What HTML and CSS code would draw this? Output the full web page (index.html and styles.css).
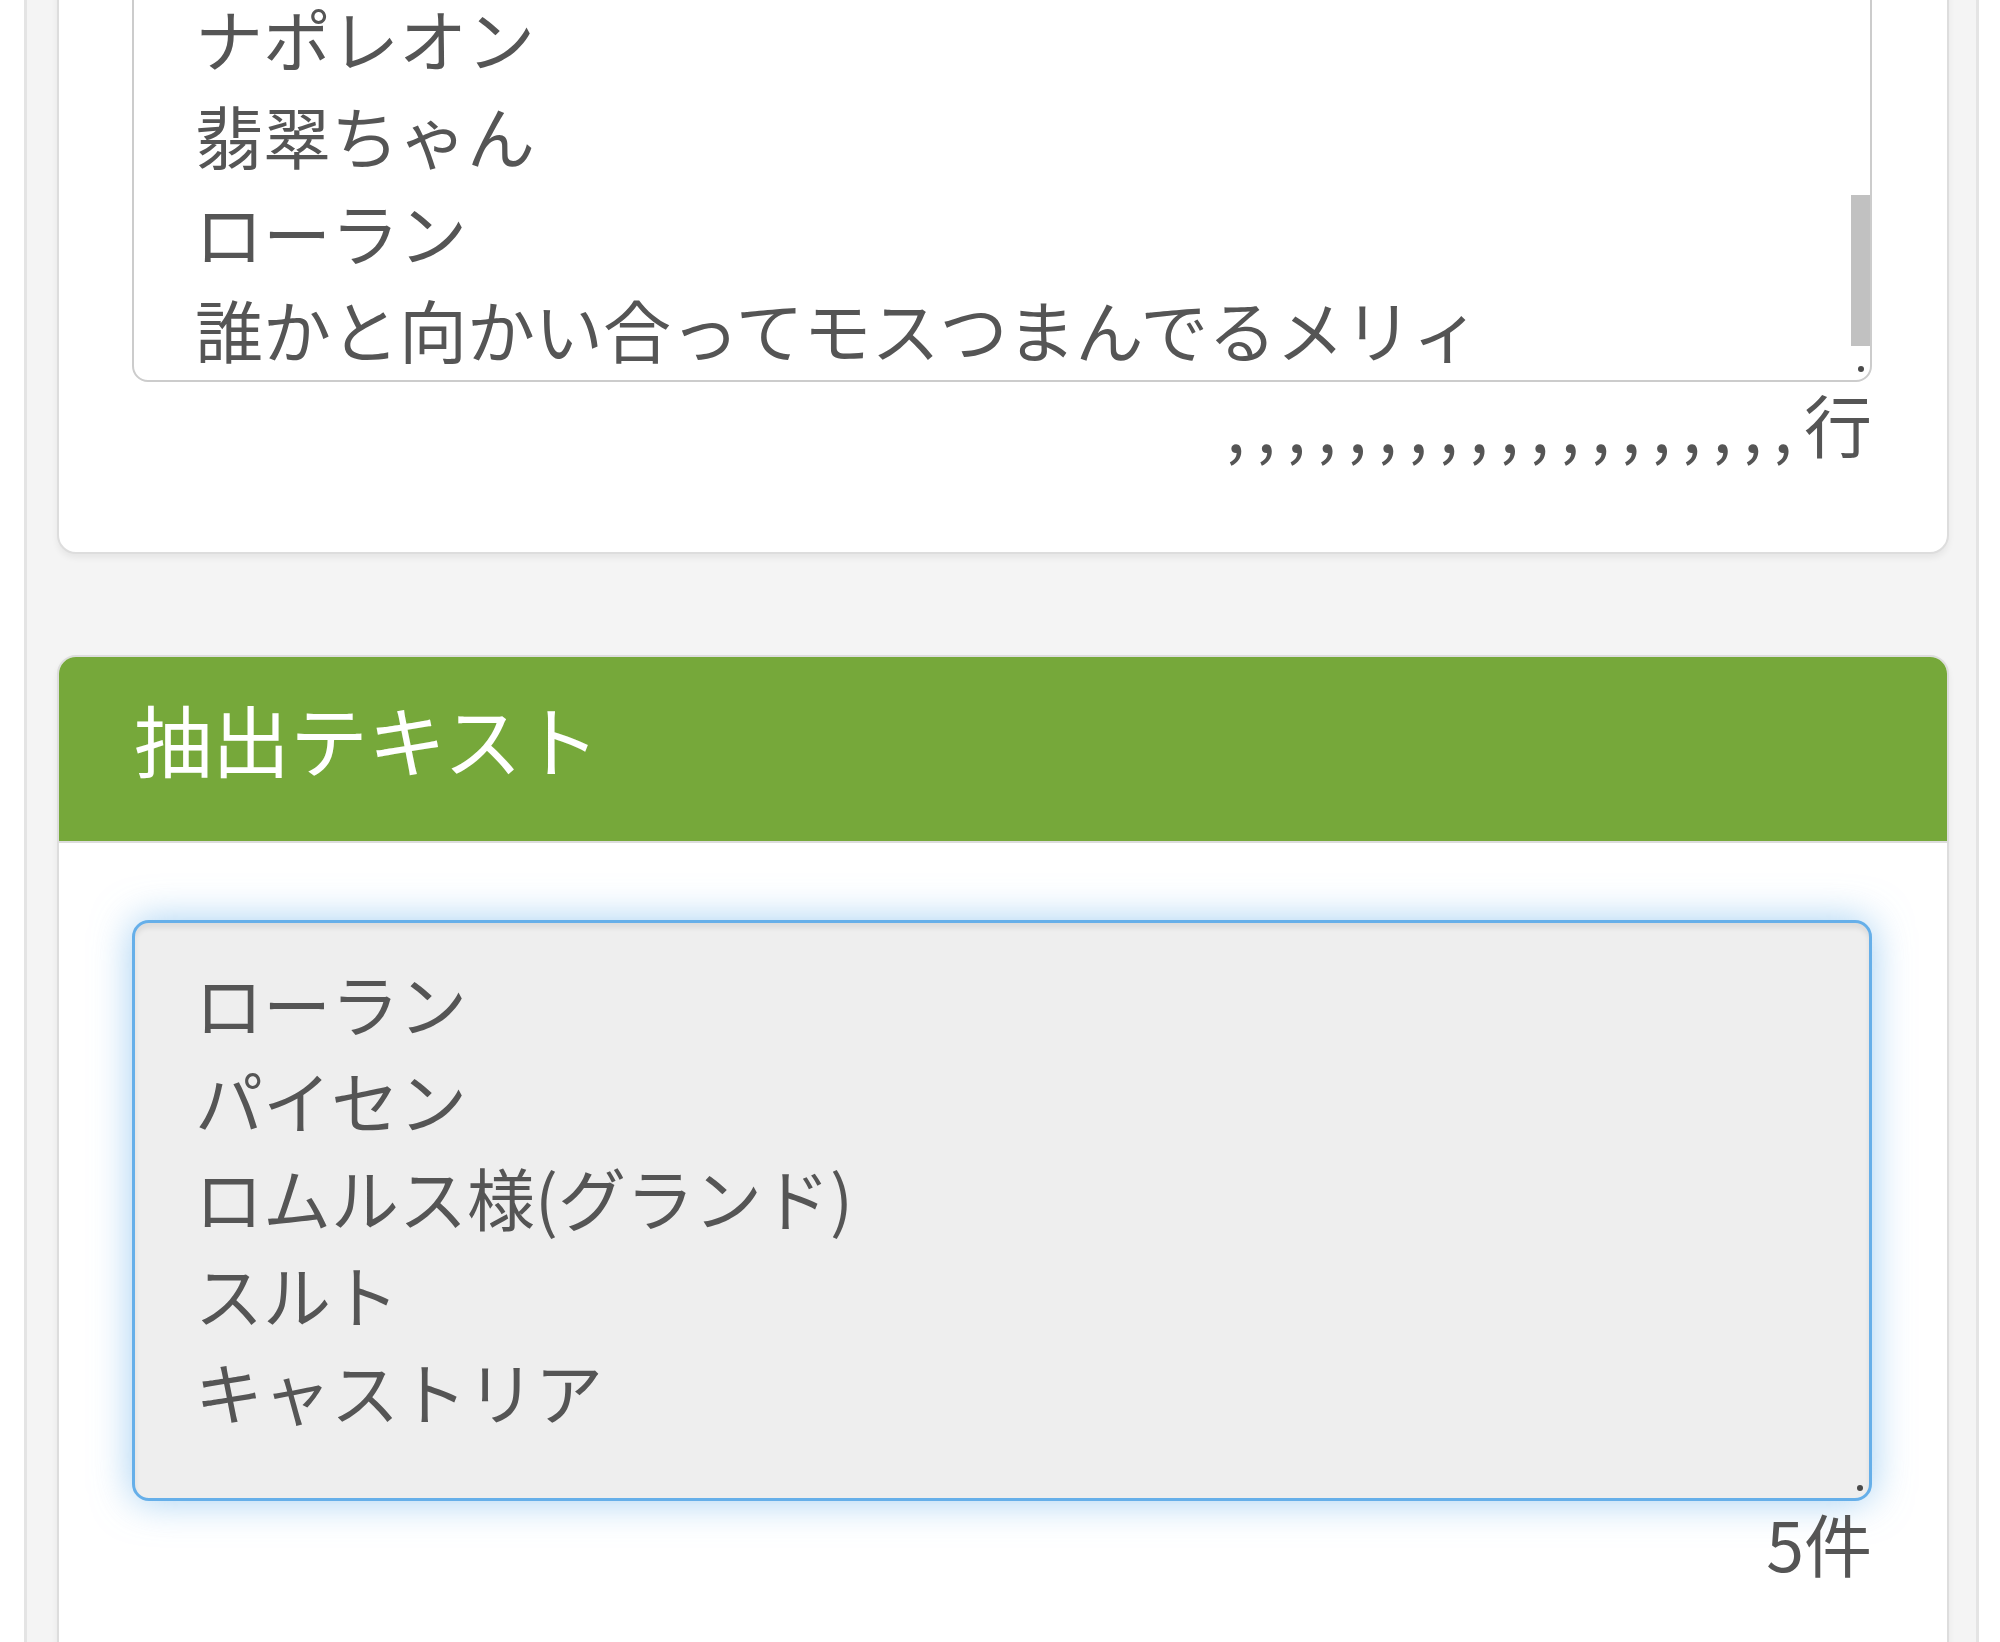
FILE: index.html
```html
<!DOCTYPE html>
<html lang="ja">
<head>
<meta charset="utf-8">
<title>抽出テキスト</title>
<link rel="stylesheet" href="styles.css">
</head>
<body>
<div class="frame">
  <section class="panel panel-source">
    <div class="panel-body">
      <div class="textbox textbox-source">
        <div class="textbox-lines textbox-lines-bottom">
          <div class="line">ナポレオン</div>
          <div class="line">翡翠ちゃん</div>
          <div class="line">ローラン</div>
          <div class="line">誰かと向かい合ってモスつまんでるメリィ</div>
        </div>
        <div class="rail">
          <div class="thumb"></div>
          <div class="grip"></div>
        </div>
      </div>
      <div class="count"><span class="commas">,,,,,,,,,,,,,,,,,,,</span>行</div>
    </div>
  </section>

  <section class="panel panel-result">
    <div class="panel-heading">
      <h3 class="panel-title">抽出テキスト</h3>
    </div>
    <div class="panel-body">
      <div class="textbox textbox-result">
        <div class="textbox-lines">
          <div class="line">ローラン</div>
          <div class="line">パイセン</div>
          <div class="line">ロムルス様(グランド)</div>
          <div class="line">スルト</div>
          <div class="line">キャストリア</div>
        </div>
        <div class="rail rail-plain">
          <div class="grip"></div>
        </div>
      </div>
      <div class="count">5件</div>
    </div>
  </section>
</div>
</body>
</html>
```

FILE: styles.css
```css
html, body {
  margin: 0;
  padding: 0;
  background: #ffffff;
}

body {
  font-family: "Noto Sans CJK JP", "Noto Sans", sans-serif;
  color: #555555;
  height: 1642px;
  overflow: hidden;
}

.frame {
  margin: 0 21px 0 24px;
  background: #f4f4f4;
  border-left: 3px solid #e4e4e4;
  border-right: 3px solid #e4e4e4;
  padding: 0 27px 0 30px;
  min-height: 1642px;
  box-sizing: border-box;
}

.panel {
  background: #ffffff;
  border: 2px solid #dddddd;
  border-radius: 19px;
  box-shadow: 0 4px 6px rgba(0, 0, 0, 0.06);
}

.panel-source {
  margin-top: -200px;
  margin-bottom: 101px;
}

.panel-body {
  padding: 73px 75px 73px 73px;
}

.panel-result .panel-body {
  padding-top: 77px;
}

.panel-heading {
  background: #76a83a;
  border-bottom: 2px solid #dcdcdc;
  border-radius: 17px 17px 0 0;
  padding: 38px 73px 60px 75px;
}

.panel-title {
  margin: 0;
  font-size: 78px;
  line-height: 86px;
  font-weight: 400;
  color: #ffffff;
}

.textbox {
  display: flex;
  box-sizing: border-box;
  font-size: 68px;
  line-height: 97px;
  color: #555555;
}

.textbox-source {
  height: 507px;
  border: 2px solid #cccccc;
  border-radius: 16px;
  background: #ffffff;
  overflow: hidden;
}

.textbox-result {
  height: 581px;
  border: 3px solid #66afe9;
  border-radius: 17px;
  background: #eeeeee;
  box-shadow: inset 0 5px 5px rgba(0, 0, 0, 0.075), 0 0 39px rgba(102, 175, 233, 0.6);
}

.textbox-lines {
  flex: 1;
  padding: 31px 0 0 60px;
  overflow: hidden;
  white-space: nowrap;
}

.textbox-lines-bottom {
  display: flex;
  flex-direction: column;
  justify-content: flex-end;
  padding: 0 0 3px 61px;
}

.rail {
  width: 19px;
  display: flex;
  flex-direction: column;
  align-items: center;
}

.thumb {
  width: 19px;
  height: 151px;
  margin-top: 318px;
  background: #c1c1c1;
}

.grip {
  width: 6px;
  height: 6px;
  margin-top: auto;
  margin-bottom: 8px;
  border-radius: 50%;
  background: #4a4a4a;
}

.rail-plain .grip {
  margin-bottom: 7px;
}

.count {
  text-align: right;
  font-size: 68px;
  line-height: 97px;
  margin-top: -7px;
  margin-bottom: 7px;
  color: #555555;
  white-space: nowrap;
}

.commas {
  letter-spacing: 11.5px;
}
```
